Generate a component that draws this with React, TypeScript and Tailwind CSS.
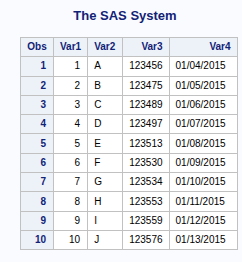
import React from "react";

const rows = [
  [1, 1, "A", "123456", "01/04/2015"],
  [2, 2, "B", "123475", "01/05/2015"],
  [3, 3, "C", "123489", "01/06/2015"],
  [4, 4, "D", "123497", "01/07/2015"],
  [5, 5, "E", "123513", "01/08/2015"],
  [6, 6, "F", "123530", "01/09/2015"],
  [7, 7, "G", "123534", "01/10/2015"],
  [8, 8, "H", "123553", "01/11/2015"],
  [9, 9, "I", "123559", "01/12/2015"],
  [10, 10, "J", "123576", "01/13/2015"],
];

export default function App() {
  return (
    <div className="w-[242px] h-[262px] bg-[#fafbfe] font-['Liberation_Sans',Arial,sans-serif] overflow-hidden">
      <div className="pt-[8px] h-[37px] text-center text-[13px] leading-[16px] font-bold text-[#112277] pl-[8px]">
        The SAS System
      </div>
      <table className="ml-[20px] border-collapse border border-[#c1c1c1] text-[10px] leading-[12px]">
        <colgroup>
          <col className="w-[33px]" />
          <col className="w-[34px]" />
          <col className="w-[35px]" />
          <col className="w-[46px]" />
          <col className="w-[68px]" />
        </colgroup>
        <thead>
          <tr className="h-[19.3px] bg-[#edf2f9] text-[#112277] font-bold">
            <th className="border border-[#c1c1c1] px-[6px] text-center">Obs</th>
            <th className="border border-[#c1c1c1] px-[6px] text-right">Var1</th>
            <th className="border border-[#c1c1c1] px-[6px] text-left">Var2</th>
            <th className="border border-[#c1c1c1] px-[6px] text-right">Var3</th>
            <th className="border border-[#c1c1c1] px-[6px] text-right">Var4</th>
          </tr>
        </thead>
        <tbody>
          {rows.map((r) => (
            <tr key={r[0]} className="h-[19.3px]">
              <th className="border border-[#c1c1c1] bg-[#edf2f9] text-[#112277] font-bold px-[7px] text-right">{r[0]}</th>
              <td className="border border-[#c1c1c1] bg-white text-black px-[7px] text-right">{r[1]}</td>
              <td className="border border-[#c1c1c1] bg-white text-black px-[6px] text-left">{r[2]}</td>
              <td className="border border-[#c1c1c1] bg-white text-black px-[6px] text-left">{r[3]}</td>
              <td className="border border-[#c1c1c1] bg-white text-black px-[6px] text-left">{r[4]}</td>
            </tr>
          ))}
        </tbody>
      </table>
    </div>
  );
}
